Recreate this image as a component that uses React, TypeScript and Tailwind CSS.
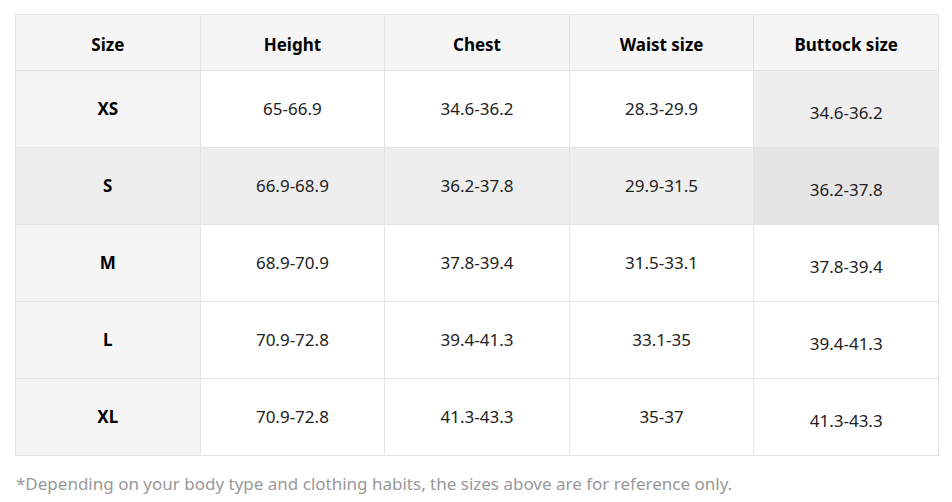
import React from "react";

const rows = [
  { size: "XS", h: "65-66.9", c: "34.6-36.2", w: "28.3-29.9", b: "34.6-36.2" },
  { size: "S", h: "66.9-68.9", c: "36.2-37.8", w: "29.9-31.5", b: "36.2-37.8" },
  { size: "M", h: "68.9-70.9", c: "37.8-39.4", w: "31.5-33.1", b: "37.8-39.4" },
  { size: "L", h: "70.9-72.8", c: "39.4-41.3", w: "33.1-35", b: "39.4-41.3" },
  { size: "XL", h: "70.9-72.8", c: "41.3-43.3", w: "35-37", b: "41.3-43.3" },
];

export default function App() {
  return (
    <div
      className="w-[952px] h-[502px] bg-white pl-[15px] pt-[14px]"
      style={{ fontFamily: '"Noto Sans", "Open Sans", sans-serif' }}
    >
      <table className="w-[924px] border-collapse table-fixed">
        <thead>
          <tr className="h-[56px] bg-[#f5f5f5]">
            {["Size", "Height", "Chest", "Waist size", "Buttock size"].map((t) => (
              <th
                key={t}
                className="border border-[#e4e4e4] text-center text-[17px] font-bold text-black p-0 pt-[4px]"
              >
                {t}
              </th>
            ))}
          </tr>
        </thead>
        <tbody>
          {rows.map((r, i) => {
            const rowBg = i === 1 ? "bg-[#eeeeee]" : "bg-white";
            const firstBg = i === 1 ? "bg-[#eeeeee]" : "bg-[#f5f5f5]";
            const buttBg = i === 0 ? "bg-[#eeeeee]" : i === 1 ? "bg-[#e5e5e5]" : "bg-white";
            return (
              <tr key={r.size} className="h-[77px]">
                <td className={`border border-[#e4e4e4] text-center text-[17px] font-bold text-black p-0 ${firstBg}`}>
                  {r.size}
                </td>
                <td className={`border border-[#e4e4e4] text-center text-[17px] text-[#222] p-0 ${rowBg}`}>{r.h}</td>
                <td className={`border border-[#e4e4e4] text-center text-[17px] text-[#222] p-0 ${rowBg}`}>{r.c}</td>
                <td className={`border border-[#e4e4e4] text-center text-[17px] text-[#222] p-0 ${rowBg}`}>{r.w}</td>
                <td className={`border border-[#e4e4e4] text-center text-[17px] text-[#222] p-0 pt-[7px] ${buttBg}`}>{r.b}</td>
              </tr>
            );
          })}
        </tbody>
      </table>
      <p className="mt-[16px] pl-[1px] text-[17px] leading-[24px] text-[#999999]">
        *Depending on your body type and clothing habits, the sizes above are for reference only.
      </p>
    </div>
  );
}
